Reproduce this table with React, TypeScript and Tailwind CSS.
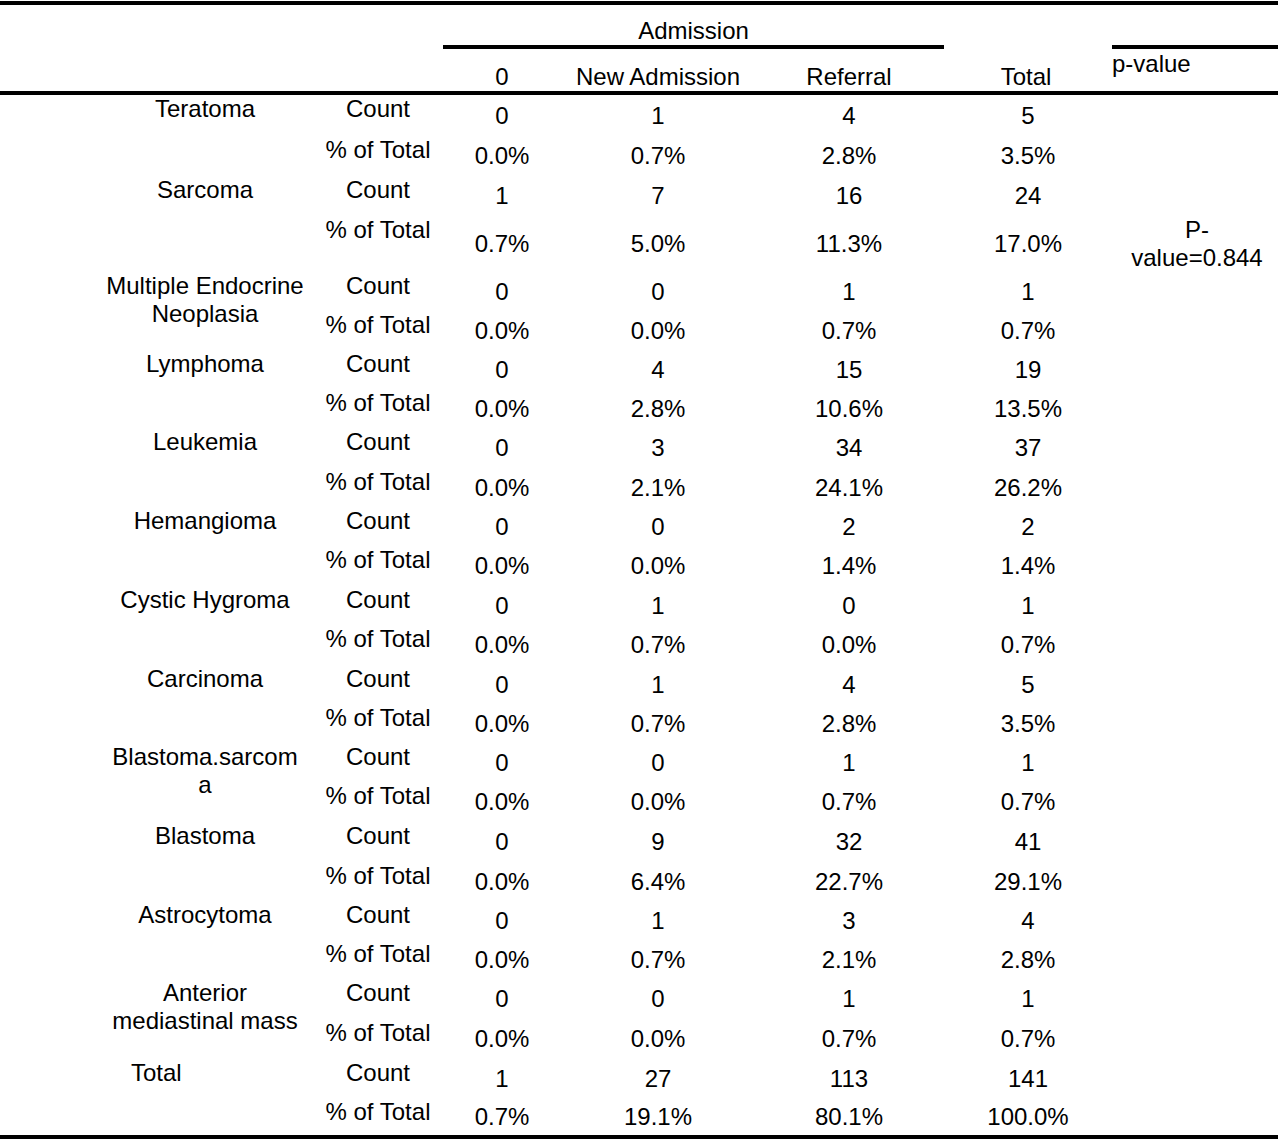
import React from "react";

type Group = { label: string[]; counts: string[]; pcts: string[]; left?: boolean };

const groups: Group[] = [
  { label: ["Teratoma"], counts: ["0", "1", "4", "5"], pcts: ["0.0%", "0.7%", "2.8%", "3.5%"] },
  { label: ["Sarcoma"], counts: ["1", "7", "16", "24"], pcts: ["0.7%", "5.0%", "11.3%", "17.0%"] },
  { label: ["Multiple Endocrine", "Neoplasia"], counts: ["0", "0", "1", "1"], pcts: ["0.0%", "0.0%", "0.7%", "0.7%"] },
  { label: ["Lymphoma"], counts: ["0", "4", "15", "19"], pcts: ["0.0%", "2.8%", "10.6%", "13.5%"] },
  { label: ["Leukemia"], counts: ["0", "3", "34", "37"], pcts: ["0.0%", "2.1%", "24.1%", "26.2%"] },
  { label: ["Hemangioma"], counts: ["0", "0", "2", "2"], pcts: ["0.0%", "0.0%", "1.4%", "1.4%"] },
  { label: ["Cystic Hygroma"], counts: ["0", "1", "0", "1"], pcts: ["0.0%", "0.7%", "0.0%", "0.7%"] },
  { label: ["Carcinoma"], counts: ["0", "1", "4", "5"], pcts: ["0.0%", "0.7%", "2.8%", "3.5%"] },
  { label: ["Blastoma.sarcom", "a"], counts: ["0", "0", "1", "1"], pcts: ["0.0%", "0.0%", "0.7%", "0.7%"] },
  { label: ["Blastoma"], counts: ["0", "9", "32", "41"], pcts: ["0.0%", "6.4%", "22.7%", "29.1%"] },
  { label: ["Astrocytoma"], counts: ["0", "1", "3", "4"], pcts: ["0.0%", "0.7%", "2.1%", "2.8%"] },
  { label: ["Anterior", "mediastinal mass"], counts: ["0", "0", "1", "1"], pcts: ["0.0%", "0.0%", "0.7%", "0.7%"] },
  { label: ["Total"], counts: ["1", "27", "113", "141"], pcts: ["0.7%", "19.1%", "80.1%", "100.0%"], left: true },
];

const rowHeights = [
  41, 40, 40, 56, 39, 39, 39, 39, 40, 39, 39, 40, 39, 40, 39, 39, 39, 40, 40, 39, 39, 39, 40, 40, 39, 37,
];

const valueWidths = ["w-[112px]", "w-[200px]", "w-[182px]", "w-[176px]"];

function SubRow({
  stat,
  values,
  height,
  pvalue,
}: {
  stat: string;
  values: string[];
  height: number;
  pvalue?: boolean;
}) {
  return (
    <div className="flex" style={{ height }}>
      <div className="w-[136px] shrink-0 text-center leading-[28px] whitespace-nowrap">{stat}</div>
      {values.map((v, i) => (
        <div key={i} className={`${valueWidths[i]} shrink-0 flex items-center justify-center whitespace-nowrap`}>
          {v}
        </div>
      ))}
      <div className="w-[162px] shrink-0 flex items-center justify-center text-center leading-[28px]">
        {pvalue ? (
          <span>
            P-
            <br />
            value=0.844
          </span>
        ) : null}
      </div>
    </div>
  );
}

export default function App() {
  return (
    <div
      className="w-[1280px] h-[1141px] bg-white text-black text-[24px] pt-px"
      style={{ fontFamily: '"Liberation Sans", Arial, sans-serif' }}
    >
      <div className="w-[1278px] border-t-4 border-b-4 border-black">
        {/* Header */}
        <div className="border-b-4 border-black">
          <div className="flex h-[44px]">
            <div className="w-[443px] shrink-0" />
            <div className="w-[501px] shrink-0 flex items-end justify-center leading-[28px] border-b-4 border-black">
              Admission
            </div>
            <div className="w-[168px] shrink-0" />
            <div className="w-[166px] shrink-0 border-b-4 border-black" />
          </div>
          <div className="flex h-[42px]">
            <div className="w-[446px] shrink-0" />
            <div className="w-[112px] shrink-0 flex items-end justify-center leading-[28px]">0</div>
            <div className="w-[200px] shrink-0 flex items-end justify-center leading-[28px] whitespace-nowrap">
              New Admission
            </div>
            <div className="w-[182px] shrink-0 flex items-end justify-center leading-[28px]">Referral</div>
            <div className="w-[172px] shrink-0 flex items-end justify-center leading-[28px]">Total</div>
            <div className="w-[166px] shrink-0 leading-[28px] pt-px">p-value</div>
          </div>
        </div>
        {/* Body */}
        <div className="flex flex-col">
          {groups.map((g, gi) => (
            <div key={gi} className="flex">
              <div className="w-[310px] shrink-0">
                {g.left ? (
                  <div className="pl-[131px] leading-[28px] whitespace-nowrap">{g.label[0]}</div>
                ) : (
                  <div className="ml-[100px] w-[210px] text-center leading-[28px] whitespace-nowrap">
                    {g.label.map((l, li) => (
                      <div key={li}>{l}</div>
                    ))}
                  </div>
                )}
              </div>
              <div className="flex flex-col">
                <SubRow stat="Count" values={g.counts} height={rowHeights[gi * 2]} />
                <SubRow
                  stat="% of Total"
                  values={g.pcts}
                  height={rowHeights[gi * 2 + 1]}
                  pvalue={gi === 1}
                />
              </div>
            </div>
          ))}
        </div>
      </div>
    </div>
  );
}
